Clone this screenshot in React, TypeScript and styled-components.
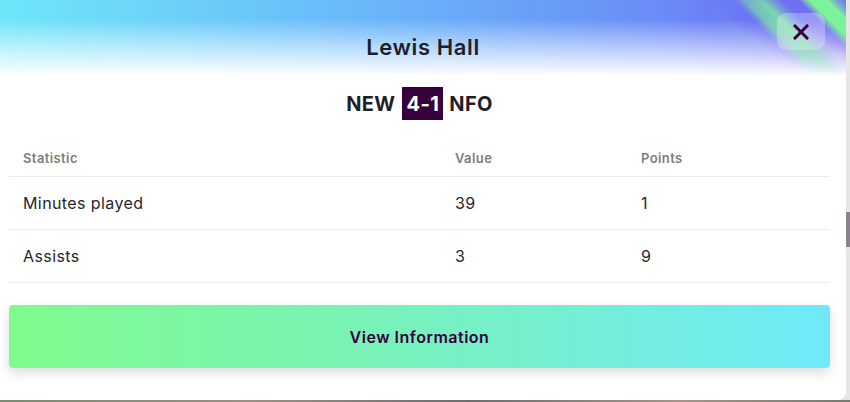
import React from 'react';
import styled, {createGlobalStyle} from 'styled-components';

const GlobalStyle = createGlobalStyle`
  html, body {
    margin: 0;
    padding: 0;
    background: #e2e2e2;
    font-family: Inter, "Noto Sans", Arial, sans-serif;
    overflow: hidden;
  }
`;

const Page = styled.div`
  display: flex;
  flex-direction: column;
  width: 850px;
  height: 402px;
`;

const Stage = styled.div`
  display: flex;
  flex-direction: row;
  height: 400px;
`;

const Rail = styled.div`
  flex: 1;
  display: flex;
  flex-direction: column;
  background: #e6e6e6;
`;

const RailThumb = styled.div`
  margin-top: 212px;
  height: 35px;
  background: #8c7f8f;
`;

const PhotoStrip = styled.div`
  height: 2px;
  background: linear-gradient(90deg, #7d8a74 0%, #9a8f86 30%, #6c6f70 55%, #a3958c 80%, #767a70 100%);
`;

const Modal = styled.div`
  position: relative;
  width: 846px;
  height: 400px;
  box-sizing: border-box;
  display: flex;
  flex-direction: column;
  background: #fff;
  border-radius: 0 0 8px 0;
  overflow: hidden;
  padding: 0 16px 0 9px;
`;

const Header = styled.div`
  position: relative;
  display: flex;
  justify-content: center;
  height: 76px;
  box-sizing: border-box;
  padding-top: 33px;
  margin: 0 -16px 0 -9px;
  background:
    linear-gradient(180deg, rgba(255, 255, 255, 0) 25%, rgba(255, 255, 255, 0.55) 65%, #fff 100%),
    linear-gradient(90deg, #6ee6f8 0%, #6bc6f9 30%, #69a9f8 55%, #6a8cf6 78%, #6b73f4 90%, #7a6cf2 100%);

  &::before {
    content: '';
    position: absolute;
    top: 0;
    right: 0;
    width: 170px;
    height: 90px;
    background: repeating-linear-gradient(
      45deg,
      rgba(110, 110, 245, 0) 0px,
      rgba(110, 110, 245, 0.35) 12px,
      #7ef29a 20px,
      #7ef29a 32px,
      rgba(120, 230, 170, 0.5) 38px,
      rgba(110, 110, 245, 0) 46px
    );
    -webkit-mask-image: radial-gradient(ellipse 150px 85px at 100% 0%, #000 40%, transparent 90%);
    mask-image: radial-gradient(ellipse 150px 85px at 100% 0%, #000 40%, transparent 90%);
  }
`;

const Title = styled.h2`
  position: relative;
  margin: 0;
  font-size: 22px;
  line-height: 28px;
  font-weight: 600;
  letter-spacing: 0.6px;
  color: #1f1f2c;
`;

const CloseButton = styled.button`
  position: absolute;
  top: 13px;
  right: 21px;
  width: 48px;
  height: 37px;
  display: flex;
  align-items: center;
  justify-content: center;
  border: none;
  border-radius: 9px;
  background: rgba(255, 255, 255, 0.28);
  padding: 0;
  cursor: pointer;
`;

const Score = styled.div`
  display: flex;
  justify-content: center;
  align-items: center;
  gap: 6px;
  margin-top: 11px;
  height: 33px;
  font-size: 20px;
  font-weight: 700;
  letter-spacing: 0.4px;
  color: #1f1f2c;
`;

const ScoreBox = styled.span`
  display: flex;
  align-items: center;
  height: 33px;
  padding: 0 4px 0 5px;
  background: #37003c;
  color: #fff;
`;

const Table = styled.div`
  display: flex;
  flex-direction: column;
  margin-top: 20px;
`;

const Row = styled.div<{head?: boolean}>`
  display: grid;
  grid-template-columns: 432px 186px 1fr;
  align-items: center;
  box-sizing: border-box;
  height: ${({head}) => (head ? '37px' : '53px')};
  padding-left: 14px;
  border-bottom: 1px solid #ebebeb;
  font-size: ${({head}) => (head ? '13px' : '16px')};
  font-weight: ${({head}) => (head ? 600 : 400)};
  color: ${({head}) => (head ? '#7d7d7d' : '#26262e')};
  letter-spacing: ${({head}) => (head ? '0.4px' : '0.4px')};
`;

const ActionButton = styled.button`
  margin-top: 22px;
  height: 63px;
  border: none;
  border-radius: 4px;
  background: linear-gradient(90deg, #7ffb8e 0%, #78f2b8 45%, #6fe9f9 100%);
  box-shadow: 0 5px 12px rgba(0, 0, 0, 0.14);
  font-family: Inter, "Noto Sans", Arial, sans-serif;
  font-size: 16px;
  font-weight: 600;
  letter-spacing: 0.5px;
  color: #37003c;
  cursor: pointer;
`;

const stats = [
  {name: 'Minutes played', value: 39, points: 1},
  {name: 'Assists', value: 3, points: 9},
];

export default function App() {
  return (
    <>
      <GlobalStyle />
      <Page>
        <Stage>
          <Modal>
            <Header>
              <Title>Lewis Hall</Title>
              <CloseButton aria-label="Close">
                <svg width="16" height="16" viewBox="0 0 16 16">
                  <path d="M2 2 L14 14 M14 2 L2 14" stroke="#37003c" strokeWidth="3" strokeLinecap="square" />
                </svg>
              </CloseButton>
            </Header>
            <Score>
              <span>NEW</span>
              <ScoreBox>4-1</ScoreBox>
              <span>NFO</span>
            </Score>
            <Table>
              <Row head>
                <span>Statistic</span>
                <span>Value</span>
                <span>Points</span>
              </Row>
              {stats.map((s) => (
                <Row key={s.name}>
                  <span>{s.name}</span>
                  <span>{s.value}</span>
                  <span>{s.points}</span>
                </Row>
              ))}
            </Table>
            <ActionButton>View Information</ActionButton>
          </Modal>
          <Rail>
            <RailThumb />
          </Rail>
        </Stage>
        <PhotoStrip />
      </Page>
    </>
  );
}
